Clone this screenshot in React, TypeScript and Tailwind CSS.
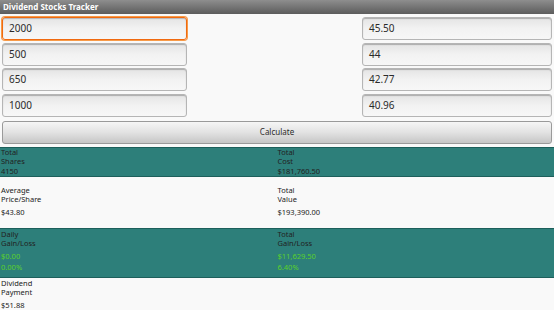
const inputs = [
  ["2000", "45.50"],
  ["500", "44"],
  ["650", "42.77"],
  ["1000", "40.96"],
];

function Field({ value, focused, wide }: { value: string; focused?: boolean; wide?: boolean }) {
  return (
    <div
      className={`h-[23px] ${wide ? "w-[190px]" : "w-[185px]"} rounded-[3px] border flex items-center pl-[6px] text-[10px] text-[#2a2a2a] bg-gradient-to-b from-[#e4e4e4] via-[#f2f2f2] to-[#f7f7f7] ${
        focused
          ? "border-[#f06a10] shadow-[0_0_0_1px_#f79a48,inset_0_1px_1px_rgba(0,0,0,0.2)]"
          : "border-[#b5b5b5] shadow-[inset_0_1px_1px_rgba(0,0,0,0.25)]"
      }`}
    >
      {value}
    </div>
  );
}

function Cell({
  label,
  values,
  green,
}: {
  label: string[];
  values: string[];
  green?: boolean;
}) {
  return (
    <div className="flex-1 flex flex-col">
      {label.map((l) => (
        <div key={l} className="h-[9px] leading-[9px] text-[7.5px] text-[#222]">
          {l}
        </div>
      ))}
      <div className="h-[3px]" />
      {values.map((v) => (
        <div
          key={v}
          className={`h-[11px] leading-[11px] text-[7.5px] ${green ? "text-[#5ad02a]" : "text-[#222]"}`}
        >
          {v}
        </div>
      ))}
    </div>
  );
}

export default function App() {
  return (
    <div className="w-[554px] h-[310px] overflow-hidden bg-[#f9f9f9] font-['Noto_Sans',sans-serif]">
      <div className="h-[14px] bg-gradient-to-b from-[#8e8e8e] to-[#5c5c5c] text-white text-[8px] font-bold leading-[13px] pl-[3px]">
        Dividend Stocks Tracker
      </div>
      <div className="flex flex-col gap-[2.5px] pt-[3px] pl-[2px] pr-[2px]">
        {inputs.map(([a, b], i) => (
          <div key={a} className="flex justify-between">
            <Field value={a} focused={i === 0} />
            <Field value={b} wide />
          </div>
        ))}
      </div>
      <div className="px-[2px] pt-[4px]">
        <div className="h-[23px] rounded-[3px] border border-[#9a9a9a] bg-gradient-to-b from-[#f6f6f6] via-[#e2e2e2] to-[#c6c6c6] flex items-center justify-center text-[8px] text-[#2b2b2b]">
          Calculate
        </div>
      </div>
      <div className="mt-[3px] h-[30px] bg-[#2d7f7a] border-y border-[#1d5f5b] flex pl-[1px]">
        <Cell label={["Total", "Shares"]} values={["4150"]} />
        <Cell label={["Total", "Cost"]} values={["$181,760.50"]} />
      </div>
      <div className="h-[51px] flex items-center pl-[1px]">
        <Cell label={["Average", "Price/Share"]} values={["$43.80"]} />
        <Cell label={["Total", "Value"]} values={["$193,390.00"]} />
      </div>
      <div className="h-[50px] bg-[#2d7f7a] border-y border-[#1d5f5b] flex pl-[1px] pt-[1px]">
        <Cell label={["Daily", "Gain/Loss"]} values={["$0.00", "0.00%"]} green />
        <Cell label={["Total", "Gain/Loss"]} values={["$11,629.50", "6.40%"]} green />
      </div>
      <div className="flex pl-[1px] pt-[1px]">
        <Cell label={["Dividend", "Payment"]} values={["$51.88"]} />
        <div className="flex-1" />
      </div>
    </div>
  );
}
